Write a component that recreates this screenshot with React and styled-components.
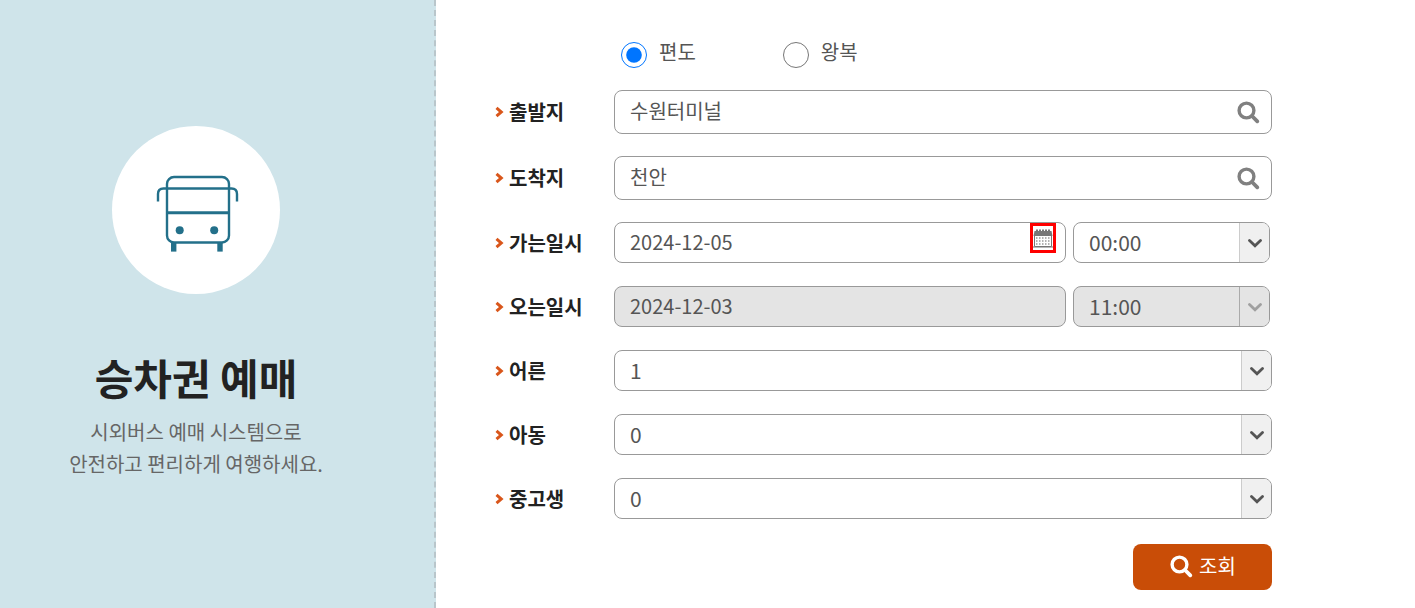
import React, { useState } from 'react';
import styled, { createGlobalStyle } from 'styled-components';

const places = [
  { id: 'departure', label: '출발지', value: '수원터미널' },
  { id: 'arrival', label: '도착지', value: '천안' },
];

const passengers = [
  { id: 'adult', label: '어른', count: 1 },
  { id: 'child', label: '아동', count: 0 },
  { id: 'student', label: '중고생', count: 0 },
];

const hours = Array.from({ length: 24 }, (_, i) => `${String(i).padStart(2, '0')}:00`);
const counts = Array.from({ length: 10 }, (_, i) => i);

const BusIcon = () => (
  <svg viewBox='0 0 168 168' fill='none' stroke='#23708a' strokeWidth='2.4' aria-hidden='true'>
    <rect x='55' y='51' width='62' height='65.5' rx='7' />
    <path d='M46 75.5V68q0-5.5 5.5-5.5h68q5.500 0 5.500 5.500v7.500' />
    <path d='M55 86.700h62' strokeWidth='3' />
    <g fill='#23708a' stroke='none'>
      <circle cx='67.700' cy='104.300' r='4' />
      <circle cx='102.200' cy='104.300' r='4' />
      <rect x='59' y='116' width='5.400' height='9.600' />
      <rect x='105.300' y='116' width='5.400' height='9.600' />
    </g>
  </svg>
);

const SearchIcon = () => (
  <svg width='24' height='24' viewBox='0 0 24 24' fill='none' stroke='currentColor' aria-hidden='true'>
    <circle cx='10.500' cy='10.500' r='7.400' strokeWidth='3.400' />
    <path d='M16 16l5.300 5.300' strokeWidth='3.800' strokeLinecap='round' />
  </svg>
);

const CalendarIcon = () => (
  <svg width='20' height='20' viewBox='0 0 20 20' aria-hidden='true'>
    <path d='M1.500 6v12.500h17V6' fill='#fff' stroke='#777' />
    <path d='M0 19h20' stroke='#777' />
    <path d='M1.500 3h17l1 5H.5z' fill='#777' />
    <path d='M3 2.500h14' stroke='#777' strokeWidth='2' strokeDasharray='2 1' />
    <path d='M3 10h14M3 13h14M3 16h14' stroke='#999' strokeWidth='1.500' strokeDasharray='1.500 1.500' />
  </svg>
);

const Chevron = () => (
  <svg width='14' height='10' viewBox='0 0 14 10' fill='none' stroke='currentColor' strokeWidth='2.8' aria-hidden='true'>
    <path d='M1.500 2.500L7 7.800l5.500-5.300' strokeLinecap='round' />
  </svg>
);

const Bullet = () => (
  <svg width='10' height='14' viewBox='0 0 10 14' fill='none' stroke='#d9561b' strokeWidth='3' aria-hidden='true'>
    <path d='M2.500 3.800L7.300 8l-4.800 4.200' />
  </svg>
);

const SelectBox = ({ id, label, options, value, disabled }) => {
  const [selected, setSelected] = useState(value);
  return (
    <SelectWrap $disabled={disabled}>
      <Select
        id={id}
        aria-label={label}
        value={selected}
        disabled={disabled}
        onChange={(e) => setSelected(e.target.value)}
      >
        {options.map((option) => (
          <option key={option} value={option}>
            {option}
          </option>
        ))}
      </Select>
      <Arrow $disabled={disabled}>
        <Chevron />
      </Arrow>
    </SelectWrap>
  );
};

const RowLabel = ({ id, children }) => (
  <Label htmlFor={id}>
    <Bullet />
    {children}
  </Label>
);

const App = () => {
  const [trip, setTrip] = useState('oneway');
  return (
    <Page>
      <GlobalStyle />
      <Intro>
        <Badge>
          <BusIcon />
        </Badge>
        <Title>승차권 예매</Title>
        <Description>
          시외버스 예매 시스템으로
          <br />
          안전하고 편리하게 여행하세요.
        </Description>
      </Intro>
      <Form onSubmit={(e) => e.preventDefault()}>
        <TripTypes>
          <TripType>
            <input type='radio' name='trip' checked={trip === 'oneway'} onChange={() => setTrip('oneway')} />
            <span>편도</span>
          </TripType>
          <TripType>
            <input type='radio' name='trip' checked={trip === 'round'} onChange={() => setTrip('round')} />
            <span>왕복</span>
          </TripType>
        </TripTypes>
        {places.map(({ id, label, value }) => (
          <Row key={id}>
            <RowLabel id={id}>{label}</RowLabel>
            <Field $tall>
              <Input id={id} type='text' defaultValue={value} />
              <IconButton type='button' aria-label={`${label} 조회`}>
                <SearchIcon />
              </IconButton>
            </Field>
          </Row>
        ))}
        <Row>
          <RowLabel id='go-date'>가는일시</RowLabel>
          <DateTime>
            <Field>
              <Input id='go-date' type='text' defaultValue='2024-12-05' />
              <CalendarButton type='button' aria-label='가는일시'>
                <CalendarIcon />
              </CalendarButton>
            </Field>
            <SelectBox id='go-time' label='가는일시' options={hours} value='00:00' />
          </DateTime>
        </Row>
        <Row>
          <RowLabel id='back-date'>오는일시</RowLabel>
          <DateTime>
            <Field $disabled>
              <Input id='back-date' type='text' defaultValue='2024-12-03' disabled />
            </Field>
            <SelectBox id='back-time' label='오는일시' options={hours} value='11:00' disabled />
          </DateTime>
        </Row>
        {passengers.map(({ id, label, count }) => (
          <Row key={id}>
            <RowLabel id={id}>{label}</RowLabel>
            <SelectBox id={id} options={counts} value={count} />
          </Row>
        ))}
        <Submit type='submit'>
          <SearchIcon />
          조회
        </Submit>
      </Form>
    </Page>
  );
};

const GlobalStyle = createGlobalStyle`
  * {
    box-sizing: border-box;
  }
  body {
    margin: 0;
    background: #fff;
    color: #555;
    font-family: 'Noto Sans CJK KR', sans-serif;
    font-size: 20px;
  }
  input, select, button {
    font: inherit;
    color: inherit;
  }
`;
const Page = styled.main`
  display: flex;
  min-height: 100vh;
`;
const Intro = styled.section`
  flex: 0 0 436px;
  display: flex;
  flex-direction: column;
  align-items: center;
  padding: 126px 42px 0 0;
  background: #cfe4ea;
  border-right: 2px dashed #b9c6cb;
  text-align: center;
`;
const Badge = styled.div`
  width: 168px;
  height: 168px;
  border-radius: 50%;
  background: #fff;
`;
const Title = styled.h1`
  margin: 52px 0 8px;
  color: #222;
  font-size: 42px;
  line-height: 62px;
`;
const Description = styled.p`
  margin: 0;
  color: #666;
  line-height: 32px;
`;
const Form = styled.form`
  flex: 1;
  display: flex;
  flex-direction: column;
  gap: 22px;
  padding: 36px 143px 18px 58px;
`;
const TripTypes = styled.div`
  display: flex;
  gap: 87px;
  height: 32px;
  padding-left: 127px;
`;
const TripType = styled.label`
  display: flex;
  align-items: flex-start;
  gap: 12px;
  line-height: 32px;
  input {
    width: 26px;
    height: 26px;
    margin: 6px 0 0;
  }
`;
const Row = styled.div`
  display: flex;
  min-height: 42px;
`;
const Label = styled.label`
  flex: 0 0 120px;
  display: flex;
  align-items: center;
  gap: 5px;
  padding-bottom: 2px;
  color: #222;
  font-weight: 700;
`;
const Field = styled.div`
  flex: 1;
  display: flex;
  align-items: flex-start;
  height: ${(props) => (props.$tall ? '44px' : '41px')};
  padding-right: 9px;
  background: ${(props) => (props.$disabled ? '#e4e4e4' : '#fff')};
  border: 1px solid #999;
  border-radius: 8px;
`;
const Input = styled.input`
  flex: 1;
  min-width: 0;
  height: 100%;
  padding: 0 15px 3px;
  border: 0;
  background: transparent;
`;
const IconButton = styled.button`
  display: flex;
  align-self: center;
  padding: 0 2px 0 0;
  border: 0;
  background: transparent;
  color: #808080;
`;
const CalendarButton = styled.button`
  display: flex;
  align-items: center;
  justify-content: center;
  width: 26px;
  height: 30px;
  padding: 0;
  border: 3px solid #f00;
  background: #fff;
`;
const DateTime = styled.div`
  flex: 1;
  display: grid;
  grid-template-columns: 1fr 197px;
  gap: 7px;
  padding-right: 2px;
`;
const SelectWrap = styled.div`
  position: relative;
  flex: 1;
  height: 41px;
  overflow: hidden;
  background: ${(props) => (props.$disabled ? '#e4e4e4' : '#fff')};
  border: 1px solid #999;
  border-radius: 8px;
`;
const Select = styled.select`
  appearance: none;
  width: 100%;
  height: 100%;
  padding: 0 40px 1px 15px;
  border: 0;
  background: transparent;
  font-size: 21px;
  &:disabled {
    opacity: 1;
  }
`;
const Arrow = styled.span`
  position: absolute;
  top: 0;
  right: 0;
  bottom: 0;
  display: flex;
  align-items: center;
  justify-content: center;
  width: 30px;
  border-left: 1px solid ${(props) => (props.$disabled ? '#aaa' : '#ccc')};
  background: ${(props) => (props.$disabled ? '#e4e4e4' : '#f0f0f0')};
  color: ${(props) => (props.$disabled ? '#a0a0a0' : '#555')};
  pointer-events: none;
`;
const Submit = styled.button`
  align-self: flex-end;
  display: flex;
  align-items: center;
  justify-content: center;
  gap: 6px;
  width: 139px;
  height: 46px;
  margin-top: 2px;
  padding: 0 0 3px;
  border: 0;
  border-radius: 8px;
  background: #c94d07;
  color: #fff;
`;

export default App;
